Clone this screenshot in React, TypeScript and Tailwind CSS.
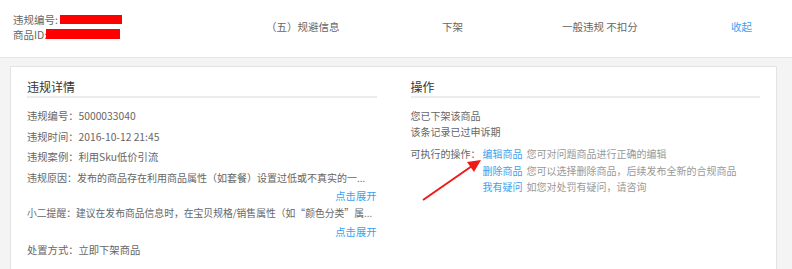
import React from 'react';

const font = {fontFamily: '"Noto Sans CJK SC", "Noto Sans", sans-serif'};

const Header: React.FC = () => (
    <div className="h-[58px] bg-white border-b border-[#e6e6e6] flex items-center pb-[4px] text-[10.5px] text-[#666]">
        <div className="w-[266px] pl-[13px] leading-[15px]">
            <div className="flex items-center">
                <span>违规编号:</span>
                <span className="inline-block ml-[2px] w-[62px] h-[9px] bg-[#ff0000]"></span>
            </div>
            <div className="flex items-center">
                <span>商品ID:</span>
                <span className="inline-block -ml-[1px] w-[74px] h-[10px] bg-[#ff0000]"></span>
            </div>
        </div>
        <div className="w-[176px]">（五）规避信息</div>
        <div className="w-[120px]">下架</div>
        <div className="w-[169px]">一般违规 不扣分</div>
        <a className="text-[#3d9ff0] cursor-pointer">收起</a>
    </div>
);

const Title: React.FC<{ children: React.ReactNode }> = ({children}) => (
    <div className="h-[19px] leading-[19px] text-[12px] text-[#333] border-b-2 border-[#ececec] box-content">
        {children}
    </div>
);

const Details: React.FC = () => (
    <div className="w-[350px] text-[10.3px] text-[#666]">
        <Title>违规详情</Title>
        <div className="mt-[8px] leading-[20.5px]">
            <div>违规编号：5000033040</div>
            <div>违规时间：2016-10-12 21:45</div>
            <div>违规案例：利用Sku低价引流</div>
            <div className="whitespace-nowrap text-[10px]">违规原因：发布的商品存在利用商品属性（如套餐）设置过低或不真实的一...</div>
            <div className="text-right leading-[15px] text-[#3d9ff0] cursor-pointer">点击展开</div>
            <div className="whitespace-nowrap text-[9.8px]">小二提醒：建议在发布商品信息时，在宝贝规格/销售属性（如“颜色分类”属...</div>
            <div className="text-right leading-[15px] text-[#3d9ff0] cursor-pointer">点击展开</div>
            <div className="mt-[1.5px]">处置方式：立即下架商品</div>
        </div>
    </div>
);

const actions = [
    {label: '编辑商品', desc: '您可对问题商品进行正确的编辑'},
    {label: '删除商品', desc: '您可以选择删除商品，后续发布全新的合规商品'},
    {label: '我有疑问', desc: '如您对处罚有疑问，请咨询'},
];

const Operations: React.FC = () => (
    <div className="w-[350px] text-[10px] text-[#666]">
        <Title>操作</Title>
        <div className="mt-[10px] leading-[16px]">
            <div>您已下架该商品</div>
            <div>该条记录已过申诉期</div>
        </div>
        <div className="mt-[6px] flex leading-[16.5px]">
            <div className="w-[72px] whitespace-nowrap">可执行的操作：</div>
            <div>
                {actions.map((a) => (
                    <div key={a.label} className="whitespace-nowrap">
                        <a className="text-[#3d9ff0] cursor-pointer">{a.label}</a>
                        <span className="ml-[4px] text-[#999]">{a.desc}</span>
                    </div>
                ))}
            </div>
        </div>
    </div>
);

const App: React.FC = () => {
    return (
        <div className="relative w-[792px] h-[269px] overflow-hidden bg-[#f4f4f4]" style={font}>
            <Header/>
            <div className="pl-[10px] pr-[15px] pt-[8px]">
                <div className="h-[230px] bg-white border border-[#e3e3e3] pt-[10px] pl-[16px] pr-[16px] flex gap-[34px]">
                    <Details/>
                    <Operations/>
                </div>
            </div>

            {/* red annotation arrow */}
            <svg className="absolute left-0 top-0 pointer-events-none" width="792" height="269">
                <line x1="423" y1="200" x2="472" y2="166" stroke="#f01818" strokeWidth="2"/>
                <polygon points="481,160 467,162 474,172" fill="#f01818"/>
            </svg>
        </div>
    );
};

export default App;
